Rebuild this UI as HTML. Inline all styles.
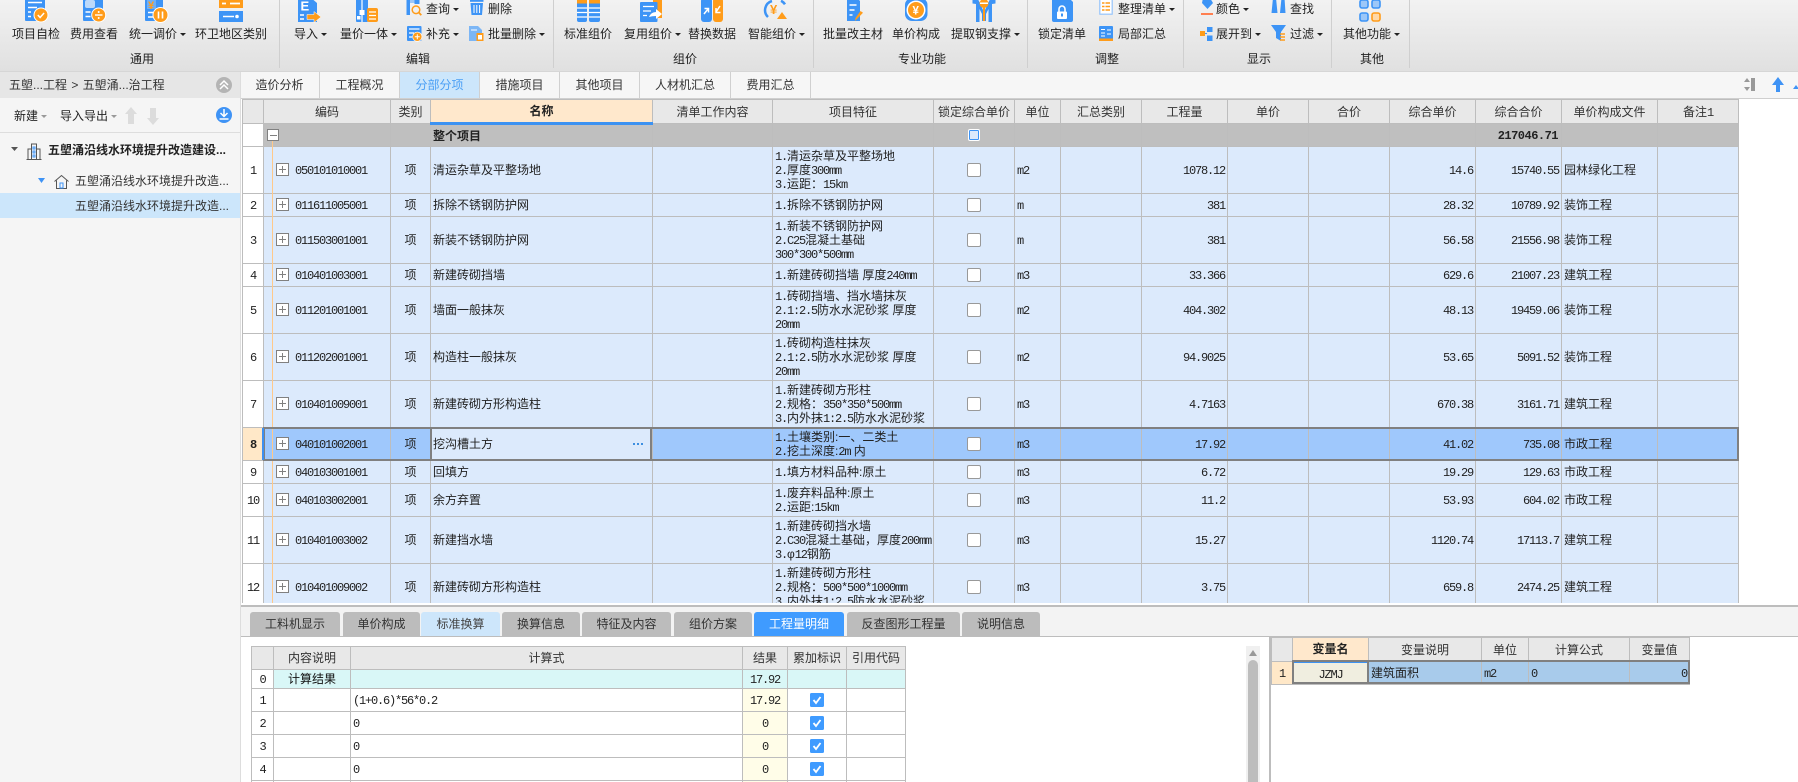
<!DOCTYPE html>
<html lang="zh"><head><meta charset="utf-8"><title>造价软件</title>
<style>
html,body{margin:0;padding:0;width:1798px;height:782px;overflow:hidden;background:#fff}
body{position:relative;font:12px/14px "Liberation Sans","Noto Sans CJK SC",sans-serif;color:#222}
.a{position:absolute}
.t{position:absolute;white-space:nowrap;line-height:16px;color:#222}
.c{transform:translateX(-50%)}
.m::after{content:"";display:inline-block;margin-left:3px;vertical-align:2px;border:3px solid transparent;border-top:3px solid #222;border-bottom:0}
.g::after{border-top-color:#999}
#rib{left:0;top:0;width:1798px;height:71px;background:linear-gradient(#f2f2f2,#e0e0e0);border-bottom:1px solid #d6d6d6}
.sep{position:absolute;top:0;width:1px;height:68px;background:#cfcfcf}
.tb{position:absolute;top:72px;height:26px;line-height:27px;text-align:center;border-right:1px solid #d0d0d0;color:#333;box-sizing:border-box}
table{border-collapse:collapse;table-layout:fixed;font-family:"Liberation Sans","WenQuanYi Zen Hei","Noto Sans CJK SC",sans-serif;color:#222;background:#dceafc}
td,th{border:1px solid #bdbdbd;padding:0 2px;white-space:nowrap;overflow:hidden;font-weight:normal;line-height:14px;box-sizing:border-box}
th{background:#e8e8e8;color:#333;text-align:center}
i{font-style:normal;font-family:"Liberation Mono",monospace;font-size:12px;letter-spacing:-1.2px;line-height:0}
.n{background:#fff;text-align:center;padding:0}
.k{padding-left:31px;position:relative}
.k b{position:absolute;left:12px;top:50%;margin-top:-7px;width:13px;height:13px;box-sizing:border-box;border:1px solid #808080;background:linear-gradient(#808080,#808080) center/7px 1px no-repeat,linear-gradient(#808080,#808080) center/1px 7px no-repeat,#fff}
.y{text-align:center}
.r{text-align:right}
.x{text-align:center}
.x u{display:inline-block;width:14px;height:14px;box-sizing:border-box;border:1px solid #999;border-radius:2px;background:#fff;vertical-align:middle}
.h th.nm{background:#ffe8cc;font-weight:bold;color:#222;border-bottom:3px solid #3c92f2}
.grp td{background:#bfbfbf}
.btab{position:absolute;top:612px;height:24px;line-height:25px;text-align:center;background:#bcbcbc;border-radius:3px 3px 0 0;color:#333}
.low{background:#fff}
.low td{background:#fff}
.low .cy{background:#d9f7f7}
.low .ye{background:#fffde8;text-align:center}
.low .ck{text-align:center}
.low .ck svg{display:block;margin:auto}
</style></head><body>

<div class="a" id="rib"></div>
<div class="sep" style="left:279px"></div><div class="sep" style="left:553px"></div><div class="sep" style="left:813px"></div><div class="sep" style="left:1027px"></div><div class="sep" style="left:1183px"></div><div class="sep" style="left:1331px"></div><div class="sep" style="left:1409px"></div>

<svg class="a" style="left:0;top:0" width="1420" height="45" viewBox="0 0 1420 45">
<!-- 项目自检 -->
<rect x="25" y="-3" width="20" height="24" rx="1" fill="#3d94f6"/>
<path d="M28 2.500h14M28 7.500h9M28 12h3M28 16.500h3" stroke="#fff" stroke-width="1.400" fill="none"/>
<circle cx="41" cy="15" r="7.500" fill="#fff"/><circle cx="41" cy="15" r="6.500" fill="#ff9c1a"/>
<path d="M37.800 15l2.300 2.500 4-4.500" stroke="#fff" stroke-width="1.500" fill="none"/>
<!-- 费用查看 -->
<rect x="83" y="-3" width="20" height="24" rx="1" fill="#3d94f6"/>
<rect x="85" y="0" width="10" height="8" rx="2" fill="#bcd9fa"/>
<path d="M85.500 12h5M85.500 16.500h5" stroke="#fff" stroke-width="1.400"/>
<circle cx="98.700" cy="15" r="7.500" fill="#fff"/><circle cx="98.700" cy="15" r="6.500" fill="#ff9c1a"/>
<path d="M95 15h7.500" stroke="#fff" stroke-width="1.400"/><circle cx="98.700" cy="12" r="1" fill="#fff"/><circle cx="98.700" cy="18" r="1" fill="#fff"/>
<!-- 统一调价 -->
<rect x="145" y="-3" width="18" height="24" rx="1" fill="#3d94f6"/>
<rect x="147" y="-1" width="9" height="10" fill="#fff" opacity=".25"/>
<text x="148" y="9" font-size="11" font-family="Liberation Sans" font-weight="bold" fill="#ff9c1a">¥</text>
<path d="M148 12.500h5M148 17h5" stroke="#fff" stroke-width="1.400"/>
<circle cx="160.500" cy="15" r="8" fill="#fff"/><circle cx="160.500" cy="15" r="7" fill="#ff9c1a"/>
<path d="M158.500 11.500v7M162.500 11.500v7" stroke="#fff" stroke-width="1.600"/>
<!-- 环卫 -->
<rect x="219" y="-2" width="24" height="10" fill="#ff9c1a"/>
<path d="M222 3.500h4M230 3.500h10" stroke="#fff" stroke-width="1.700"/>
<rect x="219" y="11" width="24" height="11" fill="#3d94f6"/>
<path d="M223 16.500h11" stroke="#fff" stroke-width="1.500"/><circle cx="237" cy="16.500" r="1.800" fill="#fff"/>
<!-- 导入 -->
<path d="M298-3h12l7 6v19h-19z" fill="#3d94f6"/>
<text x="300.500" y="10.500" font-size="13" font-weight="bold" font-family="Liberation Sans" fill="#fff">E</text>
<path d="M300 15h4M300 19h4" stroke="#fff" stroke-width="1.400"/>
<path d="M307 14.500h7v-3l7 5.500-7 5.500v-3h-7z" fill="#ff9c1a" stroke="#fff" stroke-width=".5"/>
<!-- 量价一体 -->
<rect x="356" y="-3" width="12" height="25" rx="1" fill="#3d94f6"/>
<path d="M362 -2v24" stroke="#fff" stroke-width="1.200"/><rect x="359.500" y="10" width="5" height="5" fill="#fff"/><rect x="357" y="16" width="3.500" height="3.500" fill="#fff"/>
<rect x="367" y="8" width="11" height="14" rx="2" fill="#ff9c1a"/>
<path d="M369 12h7M369 15.500h7M369 19h7" stroke="#fff" stroke-width="1.300"/>
<!-- 查询 -->
<rect x="406.500" y="-2" width="3.500" height="17" fill="#3d94f6"/><rect x="414.500" y="-2" width="5" height="6" fill="#3d94f6"/>
<rect x="410" y="-2" width="4.500" height="5" fill="#9cc7f8"/>
<circle cx="416" cy="9.800" r="3.800" fill="none" stroke="#ff9c1a" stroke-width="1.500"/><path d="M418.800 12.500l2.500 2.700" stroke="#ff9c1a" stroke-width="1.800"/>
<!-- 删除 -->
<path d="M470.500 3h12.500l-1 12h-10.500z" fill="#3d94f6"/><rect x="470" y="0" width="13.500" height="1.800" fill="#3d94f6"/>
<path d="M474 5v8M476.800 5v8M479.600 5v8" stroke="#fff"/>
<!-- 补充 -->
<rect x="407" y="26" width="14.500" height="15" rx="1" fill="#3d94f6"/>
<path d="M409 29h10.500M409 33h5M409 37h3" stroke="#fff" stroke-width="1.200"/>
<circle cx="417.300" cy="36.700" r="5" fill="#fff"/><circle cx="417.300" cy="36.700" r="4.300" fill="#ff9c1a"/><path d="M414.800 36.700h5M417.300 34.200v5" stroke="#fff"/>
<!-- 批量删除 -->
<path d="M469 26h9l4 4v11h-13z" fill="#7cb6f5"/><path d="M471 30h6" stroke="#fff"/>
<rect x="476.500" y="33" width="7" height="8" fill="#ff9c1a"/><rect x="478" y="35" width="4" height="4.500" fill="#fff"/>
<!-- 标准组价 -->
<rect x="577" y="-2" width="10" height="24" rx="2" fill="#3d94f6"/><rect x="589" y="-2" width="11" height="24" rx="2" fill="#3d94f6"/>
<rect x="577" y="-2" width="10" height="5.500" fill="#ff9c1a"/><rect x="589" y="-2" width="11" height="5.500" fill="#ff9c1a"/>
<path d="M577 8h10M577 12.500h10M577 17h10M589 8h11M589 12.500h11M589 17h11" stroke="#fff" stroke-width="1.300"/>
<!-- 复用组价 -->
<rect x="653" y="-1" width="9" height="19" fill="#ff9c1a"/>
<rect x="640" y="2" width="17.500" height="20" rx="1" fill="#3d94f6"/>
<path d="M643 6.500h11M643 11h8M643 15.500h4" stroke="#fff" stroke-width="1.300"/>
<path d="M649 17q2-5 7-5v-3l6 5-6 5v-3q-4 0-7 1z" fill="#fff"/>
<!-- 替换数据 -->
<rect x="701" y="-2" width="11" height="24" rx="3" fill="#3d94f6"/><rect x="713" y="-2" width="10" height="24" rx="3" fill="#ff9c1a"/>
<path d="M704 14l4-5M704.500 8.500h4v4" stroke="#fff" stroke-width="1.500" fill="none"/>
<path d="M720 6l-4 6M716 8v4.500h4.500" stroke="#fff" stroke-width="1.500" fill="none"/>
<!-- 智能组价 -->
<path d="M772 1a9.500 9.500 0 0 0-4 16M781 0.800a9 9 0 0 1 4 3.500M766 8v0" stroke="#3d94f6" stroke-width="2.500" fill="none"/>
<text x="770" y="14" font-size="13" font-family="Liberation Sans" font-weight="bold" fill="#ff9c1a">¥</text>
<path d="M782 12l5 7h-10z" fill="#ff9c1a"/>
<!-- 批量改主材 -->
<path d="M847-2h10l3 3v20h-13z" fill="#3d94f6"/><path d="M849.500 5h7M849.500 10h5M849.500 15h3" stroke="#fff" stroke-width="1.400"/>
<path d="M857 19l-2 2 .5-3 5-7 2.500 1.800z" fill="#ff9c1a"/>
<!-- 单价构成 -->
<rect x="905" y="-2" width="22.500" height="23" rx="7" fill="#3d94f6"/>
<circle cx="916" cy="10" r="9.500" fill="#fff"/><circle cx="916" cy="10" r="8" fill="#ff9c1a"/>
<text x="912.500" y="14.500" font-size="11.500" font-weight="bold" font-family="Liberation Sans" fill="#fff">¥</text>
<!-- 提取钢支撑 -->
<path d="M972.500-2h5l6 13v10h-1.500v-7l-2.500-5v13h-3.500V4l-3.500-.5zM995.500-2h-5l-6 13v10h1.500v-7l2.500-5v13h3.500V4l3.500-.5z" fill="#3d94f6"/>
<circle cx="984" cy="3.500" r="4.500" fill="#ff9c1a"/><rect x="983" y="6" width="2" height="15" fill="#ff9c1a"/><rect x="980" y="2.500" width="8" height="1.500" fill="#fff"/>
<!-- 锁定清单 -->
<path d="M1052-3h16l5 5v18a2 2 0 0 1-2 2h-17a2 2 0 0 1-2-2z" fill="#3d94f6"/>
<path d="M1059 12V9a3 3 0 0 1 6 0v3" fill="none" stroke="#fff" stroke-width="1.600" />
<rect x="1057" y="11.500" width="10" height="7.500" rx="1" fill="#fff"/><rect x="1061" y="13.500" width="2" height="3" fill="#3d94f6"/>
<!-- 整理清单 -->
<rect x="1099" y="-1" width="14" height="16" rx="1" fill="#a8cdf9"/><rect x="1100.500" y="0" width="11" height="13.500" fill="#fff"/>
<path d="M1102 3h8M1102 6.500h8M1102 10h8" stroke="#ff9c1a" stroke-width="1.600"/><path d="M1105 1v12" stroke="#fff"/>
<!-- 局部汇总 -->
<rect x="1099" y="26" width="14" height="15" rx="1" fill="#3d94f6"/>
<path d="M1101 29.500h4M1101 33h4M1101 36h4M1107 30h4M1107 34h4" stroke="#fff" stroke-width="1.100"/><rect x="1099" y="38.500" width="14" height="2.500" fill="#ff9c1a"/>
<!-- 颜色 -->
<path d="M1203 -2h7l3 5-5.500 6-5.500-6z" fill="#3d94f6"/><rect x="1201" y="13" width="12" height="2" fill="#ff7f50"/>
<!-- 查找 -->
<path d="M1273-2h3l1.500 15h-6zM1281.500-2h3l1 15h-5.500z" fill="#3d94f6"/>
<!-- 展开到 -->
<rect x="1200" y="31" width="5" height="5" fill="#ff9c1a"/><rect x="1207" y="27" width="5.500" height="5" fill="#3d94f6"/><rect x="1207" y="35.500" width="5.500" height="5.500" fill="#3d94f6"/>
<path d="M1205 33.500h2" stroke="#3d94f6"/>
<!-- 过滤 -->
<path d="M1271 25h15l-5 7v9l-5-3v-6z" fill="#3d94f6"/><path d="M1280 34h5M1280 37h5M1280 40h5" stroke="#ff9c1a" stroke-width="1.400"/>
<!-- 其他功能 -->
<rect x="1360" y="0" width="8" height="8" rx="2" fill="#9cc7f8" stroke="#3d94f6" stroke-width="1.600"/><rect x="1360" y="13" width="8" height="8" rx="2" fill="#9cc7f8" stroke="#3d94f6" stroke-width="1.600"/>
<rect x="1372" y="0" width="8" height="8" rx="2" fill="#9cc7f8" stroke="#3d94f6" stroke-width="1.600"/><rect x="1372" y="13" width="8" height="8" rx="2" fill="#ffd9a8" stroke="#ff9c1a" stroke-width="1.600"/>
</svg>

<span class="t" style="left:12px;top:26px">项目自检</span>
<span class="t" style="left:70px;top:26px">费用查看</span>
<span class="t m" style="left:129px;top:26px">统一调价</span>
<span class="t" style="left:195px;top:26px">环卫地区类别</span>
<span class="t c" style="left:142px;top:51px">通用</span>
<span class="t m" style="left:294px;top:26px">导入</span>
<span class="t m" style="left:340px;top:26px">量价一体</span>
<span class="t m" style="left:426px;top:1px">查询</span>
<span class="t" style="left:488px;top:1px">删除</span>
<span class="t m" style="left:426px;top:26px">补充</span>
<span class="t m" style="left:488px;top:26px">批量删除</span>
<span class="t c" style="left:418px;top:51px">编辑</span>
<span class="t" style="left:564px;top:26px">标准组价</span>
<span class="t m" style="left:624px;top:26px">复用组价</span>
<span class="t" style="left:688px;top:26px">替换数据</span>
<span class="t m" style="left:748px;top:26px">智能组价</span>
<span class="t c" style="left:685px;top:51px">组价</span>
<span class="t" style="left:823px;top:26px">批量改主材</span>
<span class="t" style="left:892px;top:26px">单价构成</span>
<span class="t m" style="left:951px;top:26px">提取钢支撑</span>
<span class="t c" style="left:922px;top:51px">专业功能</span>
<span class="t" style="left:1038px;top:26px">锁定清单</span>
<span class="t m" style="left:1118px;top:1px">整理清单</span>
<span class="t" style="left:1118px;top:26px">局部汇总</span>
<span class="t c" style="left:1107px;top:51px">调整</span>
<span class="t m" style="left:1216px;top:1px">颜色</span>
<span class="t" style="left:1290px;top:1px">查找</span>
<span class="t m" style="left:1216px;top:26px">展开到</span>
<span class="t m" style="left:1290px;top:26px">过滤</span>
<span class="t c" style="left:1259px;top:51px">显示</span>
<span class="t m" style="left:1343px;top:26px">其他功能</span>
<span class="t c" style="left:1372px;top:51px">其他</span>

<!-- left panel -->
<div class="a" style="left:0;top:72px;width:240px;height:710px;background:#f5f5f5;border-right:1px solid #ddd"></div>
<div class="a" style="left:0;top:72px;width:240px;height:26px;background:#e6e6e6"></div>
<span class="t" style="left:9px;top:77px;color:#333;word-spacing:1px">五塱...工程 &gt; 五塱涌...治工程</span>
<svg class="a" style="left:215px;top:76px" width="18" height="18"><circle cx="9" cy="9" r="8" fill="#b4b4b4"/><path d="M5 9l4-4 4 4M5 13l4-4 4 4" fill="none" stroke="#fff" stroke-width="1.500"/></svg>
<span class="t m g" style="left:14px;top:108px">新建</span>
<span class="t m g" style="left:60px;top:108px">导入导出</span>
<svg class="a" style="left:125px;top:106px" width="38" height="20" fill="#dcdcdc"><path d="M6 1l6 7H9v10H3V8H0zM28 19l6-7h-3V2h-6v10h-3z"/></svg>
<svg class="a" style="left:215px;top:106px" width="18" height="18"><circle cx="9" cy="9" r="8" fill="#3f93f5"/><path d="M9 3v7M5.500 7l3.500 3.500L12.500 7M4.500 13h9" fill="none" stroke="#fff" stroke-width="1.500"/></svg>
<div class="a" style="left:0;top:132px;width:240px;height:1px;background:#ddd"></div>
<svg class="a" style="left:10px;top:145px" width="8" height="8"><path d="M1 2h7l-3.500 4z" fill="#555"/></svg>
<svg class="a" style="left:26px;top:142px" width="16" height="18" fill="none" stroke="#555"><path d="M.5 17.500h15M5.500 17V2h5v15M2 17V7h3.500M14 17V7h-3.500"/><path d="M7 5h2v2H7zM7 9h2v2H7zM7 13h2v2H7z" stroke="#3d94f6"/></svg>
<span class="t" style="left:48px;top:142px;font-weight:bold">五塱涌沿线水环境提升改造建设...</span>
<svg class="a" style="left:37px;top:177px" width="9" height="8"><path d="M1 1h7L4.500 6z" fill="#3f93f5"/></svg>
<svg class="a" style="left:54px;top:174px" width="15" height="15" fill="none" stroke="#555"><path d="M.5 7.500l7-6 7 6M2.500 6.500v8h10v-8"/><path d="M6 9h3v5H6z" stroke="#3d94f6"/></svg>
<span class="t" style="left:75px;top:173px;color:#333">五塱涌沿线水环境提升改造...</span>
<div class="a" style="left:0;top:193px;width:240px;height:25px;background:#cce6fb"></div>
<span class="t" style="left:75px;top:198px;color:#333">五塱涌沿线水环境提升改造...</span>

<!-- tabs -->
<div class="a" style="left:241px;top:72px;width:1557px;height:26px;background:#f6f6f6"></div>
<div class="a" style="left:241px;top:98px;width:1557px;height:1px;background:#cfcfcf"></div>
<div class="tb" style="left:240px;width:80px">造价分析</div>
<div class="tb" style="left:320px;width:80px">工程概况</div>
<div class="tb" style="left:400px;width:80px;background:#cce6fb;color:#4a9ff5">分部分项</div>
<div class="tb" style="left:480px;width:80px">措施项目</div>
<div class="tb" style="left:560px;width:80px">其他项目</div>
<div class="tb" style="left:640px;width:91px">人材机汇总</div>
<div class="tb" style="left:731px;width:80px">费用汇总</div>
<svg class="a" style="left:1742px;top:76px" width="56" height="18"><path d="M5 2l3 4H2zM5 15l3-4H2z" fill="#999"/><rect x="9" y="2" width="4" height="13" fill="#999"/><path d="M36 1l6 8h-4v7h-4V9h-4z" fill="#3f93f5"/><path d="M54 15l-3-4h6z" transform="rotate(180 54 12)" fill="#3f93f5"/></svg>

<!-- main grid -->
<div class="a" style="left:242px;top:99px;width:1500px;height:504px;overflow:hidden">
<table style="width:1497px">
<colgroup><col width="21"><col width="127"><col width="40"><col width="222"><col width="120"><col width="161"><col width="81"><col width="46"><col width="81"><col width="86"><col width="81"><col width="81"><col width="86"><col width="86"><col width="96"><col width="81"></colgroup>
<tr class="h" style="height:24px"><th></th><th>编码</th><th>类别</th><th class="nm">名称</th><th>清单工作内容</th><th>项目特征</th><th>锁定综合单价</th><th>单位</th><th>汇总类别</th><th>工程量</th><th>单价</th><th>合价</th><th>综合单价</th><th>综合合价</th><th>单价构成文件</th><th>备注<i>1</i></th></tr>
<tr class="grp" style="height:23px"><td class="n" style="background:#fff"></td><td></td><td></td><td><b>整个项目</b></td><td></td><td></td><td class="x"></td><td></td><td></td><td></td><td></td><td></td><td></td><td class="r" style="padding-right:3px"><i style="font-weight:bold;letter-spacing:-.5px">217046.71</i></td><td></td><td></td></tr>
<tr style="height:47px"><td class="n"><i>1</i></td><td class="k"><b></b><i>050101010001</i></td><td class="y">项</td><td>清运杂草及平整场地</td><td></td><td><i>1.</i>清运杂草及平整场地<br><i>2.</i>厚度<i>300mm</i><br><i>3.</i>运距：<i>15km</i></td><td class="x"><u></u></td><td><i>m2</i></td><td></td><td class="r"><i>1078.12</i></td><td></td><td></td><td class="r"><i>14.6</i></td><td class="r"><i>15740.55</i></td><td>园林绿化工程</td><td></td></tr>
<tr style="height:23px"><td class="n"><i>2</i></td><td class="k"><b></b><i>011611005001</i></td><td class="y">项</td><td>拆除不锈钢防护网</td><td></td><td><i>1.</i>拆除不锈钢防护网</td><td class="x"><u></u></td><td><i>m</i></td><td></td><td class="r"><i>381</i></td><td></td><td></td><td class="r"><i>28.32</i></td><td class="r"><i>10789.92</i></td><td>装饰工程</td><td></td></tr>
<tr style="height:47px"><td class="n"><i>3</i></td><td class="k"><b></b><i>011503001001</i></td><td class="y">项</td><td>新装不锈钢防护网</td><td></td><td><i>1.</i>新装不锈钢防护网<br><i>2.C25</i>混凝土基础<br><i>300*300*500mm</i></td><td class="x"><u></u></td><td><i>m</i></td><td></td><td class="r"><i>381</i></td><td></td><td></td><td class="r"><i>56.58</i></td><td class="r"><i>21556.98</i></td><td>装饰工程</td><td></td></tr>
<tr style="height:23px"><td class="n"><i>4</i></td><td class="k"><b></b><i>010401003001</i></td><td class="y">项</td><td>新建砖砌挡墙</td><td></td><td><i>1.</i>新建砖砌挡墙 厚度<i>240mm</i></td><td class="x"><u></u></td><td><i>m3</i></td><td></td><td class="r"><i>33.366</i></td><td></td><td></td><td class="r"><i>629.6</i></td><td class="r"><i>21007.23</i></td><td>建筑工程</td><td></td></tr>
<tr style="height:47px"><td class="n"><i>5</i></td><td class="k"><b></b><i>011201001001</i></td><td class="y">项</td><td>墙面一般抹灰</td><td></td><td><i>1.</i>砖砌挡墙、挡水墙抹灰<br><i>2.1:2.5</i>防水水泥砂浆 厚度<br><i>20mm</i></td><td class="x"><u></u></td><td><i>m2</i></td><td></td><td class="r"><i>404.302</i></td><td></td><td></td><td class="r"><i>48.13</i></td><td class="r"><i>19459.06</i></td><td>装饰工程</td><td></td></tr>
<tr style="height:47px"><td class="n"><i>6</i></td><td class="k"><b></b><i>011202001001</i></td><td class="y">项</td><td>构造柱一般抹灰</td><td></td><td><i>1.</i>砖砌构造柱抹灰<br><i>2.1:2.5</i>防水水泥砂浆 厚度<br><i>20mm</i></td><td class="x"><u></u></td><td><i>m2</i></td><td></td><td class="r"><i>94.9025</i></td><td></td><td></td><td class="r"><i>53.65</i></td><td class="r"><i>5091.52</i></td><td>装饰工程</td><td></td></tr>
<tr style="height:47px"><td class="n"><i>7</i></td><td class="k"><b></b><i>010401009001</i></td><td class="y">项</td><td>新建砖砌方形构造柱</td><td></td><td><i>1.</i>新建砖砌方形柱<br><i>2.</i>规格：<i>350*350*500mm</i><br><i>3.</i>内外抹<i>1:2.5</i>防水水泥砂浆</td><td class="x"><u></u></td><td><i>m3</i></td><td></td><td class="r"><i>4.7163</i></td><td></td><td></td><td class="r"><i>670.38</i></td><td class="r"><i>3161.71</i></td><td>建筑工程</td><td></td></tr>
<tr style="height:33px;background:#9fc8fc"><td class="n" style="background:#ffe8c8"><i style="font-weight:bold">8</i></td><td class="k"><b></b><i>040101002001</i></td><td class="y">项</td><td style="background:#dceafc">挖沟槽土方</td><td></td><td><i>1.</i>土壤类别:一、二类土<br><i>2.</i>挖土深度:<i>2m</i> 内</td><td class="x"><u></u></td><td><i>m3</i></td><td></td><td class="r"><i>17.92</i></td><td></td><td></td><td class="r"><i>41.02</i></td><td class="r"><i>735.08</i></td><td>市政工程</td><td></td></tr>
<tr style="height:23px"><td class="n"><i>9</i></td><td class="k"><b></b><i>040103001001</i></td><td class="y">项</td><td>回填方</td><td></td><td><i>1.</i>填方材料品种:原土</td><td class="x"><u></u></td><td><i>m3</i></td><td></td><td class="r"><i>6.72</i></td><td></td><td></td><td class="r"><i>19.29</i></td><td class="r"><i>129.63</i></td><td>市政工程</td><td></td></tr>
<tr style="height:33px"><td class="n"><i>10</i></td><td class="k"><b></b><i>040103002001</i></td><td class="y">项</td><td>余方弃置</td><td></td><td><i>1.</i>废弃料品种:原土<br><i>2.</i>运距:<i>15km</i></td><td class="x"><u></u></td><td><i>m3</i></td><td></td><td class="r"><i>11.2</i></td><td></td><td></td><td class="r"><i>53.93</i></td><td class="r"><i>604.02</i></td><td>市政工程</td><td></td></tr>
<tr style="height:47px"><td class="n"><i>11</i></td><td class="k"><b></b><i>010401003002</i></td><td class="y">项</td><td>新建挡水墙</td><td></td><td><i>1.</i>新建砖砌挡水墙<br><i>2.C30</i>混凝土基础，厚度<i>200mm</i><br><i>3.</i>φ<i>12</i>钢筋</td><td class="x"><u></u></td><td><i>m3</i></td><td></td><td class="r"><i>15.27</i></td><td></td><td></td><td class="r"><i>1120.74</i></td><td class="r"><i>17113.7</i></td><td>建筑工程</td><td></td></tr>
<tr style="height:47px"><td class="n"><i>12</i></td><td class="k"><b></b><i>010401009002</i></td><td class="y">项</td><td>新建砖砌方形构造柱</td><td></td><td><i>1.</i>新建砖砌方形柱<br><i>2.</i>规格：<i>500*500*1000mm</i><br><i>3.</i>内外抹<i>1:2.5</i>防水水泥砂浆</td><td class="x"><u></u></td><td><i>m3</i></td><td></td><td class="r"><i>3.75</i></td><td></td><td></td><td class="r"><i>659.8</i></td><td class="r"><i>2474.25</i></td><td>建筑工程</td><td></td></tr>
</table></div>
<!-- tree line + minus + group checkbox -->
<div class="a" style="left:272px;top:141px;width:1px;height:462px;background:#ffc98a;z-index:1"></div>
<div class="a" style="left:267px;top:129px;width:12px;height:12px;box-sizing:border-box;border:1px solid #808080;background:linear-gradient(#808080,#808080) center/7px 1px no-repeat,#fff;z-index:1"></div>
<div class="a" style="left:968px;top:129px;width:12px;height:12px;box-sizing:border-box;border:1px solid #fff;background:#dceafc;box-shadow:inset 0 0 0 1px #3d94f6;border-radius:2px"></div>
<!-- selection -->
<div class="a" style="left:263px;top:427px;width:1476px;height:34px;box-sizing:border-box;border:2px solid #808080;z-index:2"></div>
<div class="a" style="left:430px;top:427px;width:222px;height:34px;box-sizing:border-box;border:2px solid #808080;z-index:2"></div>
<div class="a" style="left:262px;top:428px;width:2px;height:32px;background:#3d8ff0;z-index:3"></div>
<div class="a" style="left:633px;top:443px;z-index:3;width:10px;height:2px;background:repeating-linear-gradient(90deg,#3d8fe0 0 2px,transparent 2px 4px)"></div>

<!-- lower area -->
<div class="a" style="left:241px;top:605px;width:1557px;height:2px;background:#bdbdbd"></div>
<div class="a" style="left:241px;top:607px;width:1557px;height:29px;background:#f3f3f3"></div>
<div class="a" style="left:241px;top:636px;width:1557px;height:1px;background:#bdbdbd"></div>
<div class="btab" style="left:250px;width:90px">工料机显示</div>
<div class="btab" style="left:343px;width:77px">单价构成</div>
<div class="btab" style="left:421px;width:79px;background:#cde6fb;color:#444">标准换算</div>
<div class="btab" style="left:502px;width:78px">换算信息</div>
<div class="btab" style="left:582px;width:89px">特征及内容</div>
<div class="btab" style="left:674px;width:78px">组价方案</div>
<div class="btab" style="left:754px;width:90px;background:#3f9bff;color:#fff">工程量明细</div>
<div class="btab" style="left:847px;width:113px">反查图形工程量</div>
<div class="btab" style="left:962px;width:78px">说明信息</div>

<div class="a" style="left:251px;top:646px;width:656px;height:136px;overflow:hidden">
<table class="low" style="width:655px">
<colgroup><col width="22"><col width="77"><col width="392"><col width="45"><col width="59"><col width="59"></colgroup>
<tr style="height:23px"><th></th><th>内容说明</th><th>计算式</th><th>结果</th><th>累加标识</th><th>引用代码</th></tr>
<tr style="height:19px"><td class="n"><i>0</i></td><td class="cy" style="text-align:center;color:#111">计算结果</td><td class="cy"></td><td class="cy" style="text-align:center"><i>17.92</i></td><td class="cy"></td><td class="cy"></td></tr>
<tr style="height:23px"><td class="n"><i>1</i></td><td></td><td><i>(1+0.6)*56*0.2</i></td><td class="ye"><i>17.92</i></td><td class="ck"><svg width="14" height="14"><rect width="14" height="14" rx="1.500" fill="#3f9bff"/><path d="M3.500 7l2.500 3 4.500-6" fill="none" stroke="#fff" stroke-width="1.800"/></svg></td><td></td></tr>
<tr style="height:23px"><td class="n"><i>2</i></td><td></td><td><i>0</i></td><td class="ye"><i>0</i></td><td class="ck"><svg width="14" height="14"><rect width="14" height="14" rx="1.500" fill="#3f9bff"/><path d="M3.500 7l2.500 3 4.500-6" fill="none" stroke="#fff" stroke-width="1.800"/></svg></td><td></td></tr>
<tr style="height:23px"><td class="n"><i>3</i></td><td></td><td><i>0</i></td><td class="ye"><i>0</i></td><td class="ck"><svg width="14" height="14"><rect width="14" height="14" rx="1.500" fill="#3f9bff"/><path d="M3.500 7l2.500 3 4.500-6" fill="none" stroke="#fff" stroke-width="1.800"/></svg></td><td></td></tr>
<tr style="height:23px"><td class="n"><i>4</i></td><td></td><td><i>0</i></td><td class="ye"><i>0</i></td><td class="ck"><svg width="14" height="14"><rect width="14" height="14" rx="1.500" fill="#3f9bff"/><path d="M3.500 7l2.500 3 4.500-6" fill="none" stroke="#fff" stroke-width="1.800"/></svg></td><td></td></tr>
<tr style="height:23px"><td class="n"></td><td></td><td></td><td class="ye"></td><td></td><td></td></tr>
</table></div>

<div class="a" style="left:1246px;top:646px;width:14px;height:136px;background:#f0f0f0"></div>
<svg class="a" style="left:1249px;top:650px" width="8" height="6"><path d="M4 0l4 6H0z" fill="#999"/></svg>
<div class="a" style="left:1248px;top:660px;width:10px;height:122px;background:#bdbdbd;border-radius:5px 5px 0 0"></div>
<div class="a" style="left:1269px;top:637px;width:2px;height:145px;background:#bdbdbd"></div>

<div class="a" style="left:1271px;top:637px;width:420px;height:48px;overflow:hidden">
<table class="low" style="width:418px;background:#fff">
<colgroup><col width="21"><col width="76"><col width="113"><col width="47"><col width="101"><col width="60"></colgroup>
<tr class="h" style="height:24px"><th></th><th class="nm">变量名</th><th>变量说明</th><th>单位</th><th>计算公式</th><th>变量值</th></tr>
<tr style="height:23px"><td class="n" style="background:#ffe8c8"><i>1</i></td><td style="background:#f0eee0;text-align:center"><i>JZMJ</i></td><td style="background:#a8cbeb">建筑面积</td><td style="background:#a8cbeb"><i>m2</i></td><td style="background:#a8cbeb"><i>0</i></td><td class="r" style="background:#a8cbeb"><i>0</i></td></tr>
</table></div>
<div class="a" style="left:1292px;top:660px;width:398px;height:24px;box-sizing:border-box;border:2px solid #808080"></div>
<div class="a" style="left:1292px;top:660px;width:77px;height:24px;box-sizing:border-box;border:2px solid #808080"></div>
</body></html>
